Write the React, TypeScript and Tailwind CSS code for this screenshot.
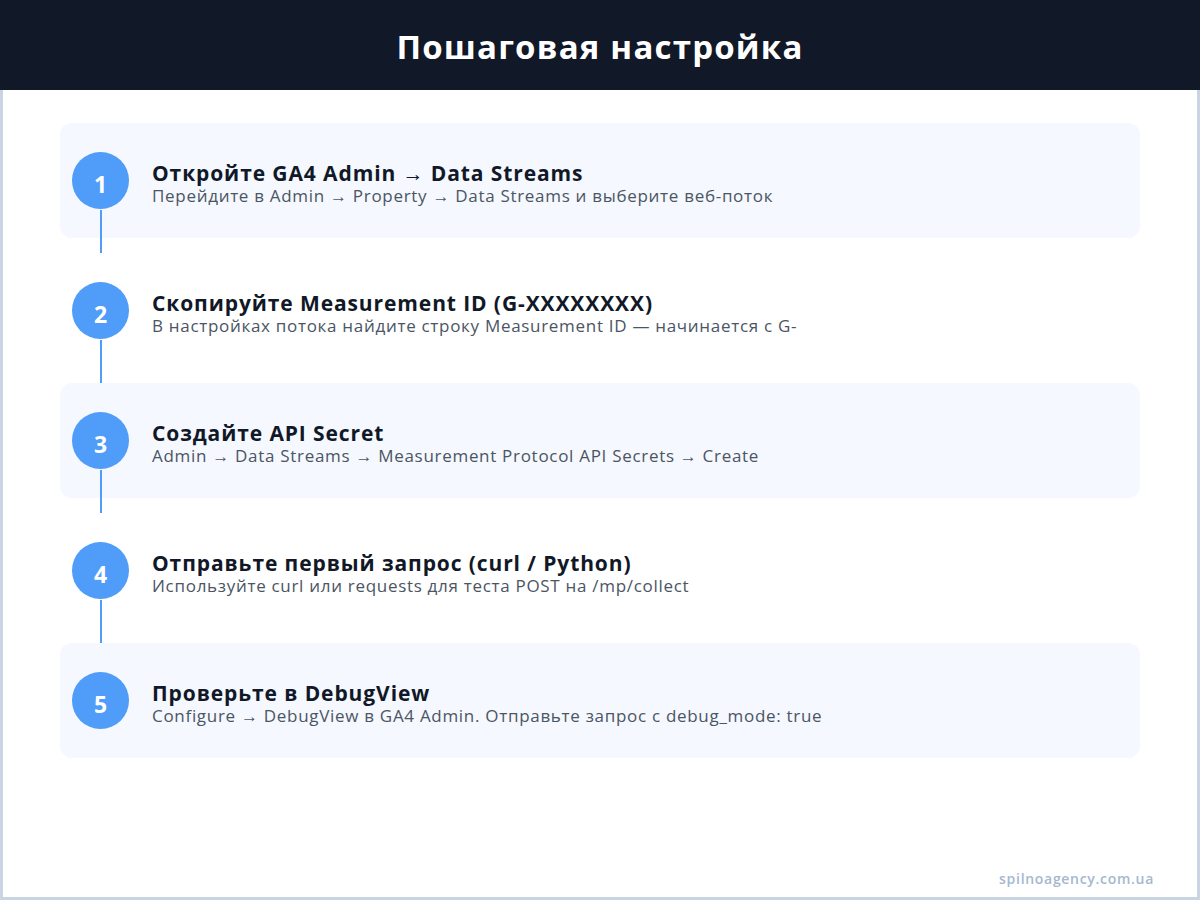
import React from "react";

const steps = [
  ["Откройте GA4 Admin → Data Streams", "Перейдите в Admin → Property → Data Streams и выберите веб-поток"],
  ["Скопируйте Measurement ID (G-XXXXXXXX)", "В настройках потока найдите строку Measurement ID — начинается с G-"],
  ["Создайте API Secret", "Admin → Data Streams → Measurement Protocol API Secrets → Create"],
  ["Отправьте первый запрос (curl / Python)", "Используйте curl или requests для теста POST на /mp/collect"],
  ["Проверьте в DebugView", "Configure → DebugView в GA4 Admin. Отправьте запрос с debug_mode: true"],
];

export default function App() {
  return (
    <div className="w-[1200px] h-[900px] flex flex-col bg-white border-x-[3px] border-b-[3px] border-[#cbd5e1]" style={{ fontFamily: '"Open Sans", "Noto Sans", sans-serif' }}>
      <div className="h-[90px] -mx-[3px] bg-[#111827] flex items-center justify-center shrink-0">
        <h1 className="text-white text-[33px] font-bold tracking-[1.2px] pt-[4px]">Пошаговая настройка</h1>
      </div>
      <div className="flex flex-col gap-[15px] px-[57px] pt-[33px]">
        {steps.map(([t, d], i) => (
          <div key={i} className={`h-[115px] rounded-[12px] flex items-center pl-[12px] gap-[23px] ${i % 2 === 0 ? "bg-[#f5f8fe]" : ""}`}>
            <div className="relative w-[57px] h-[57px] shrink-0">
              <div className="w-[57px] h-[57px] rounded-full bg-[#4f9cf9] flex items-center justify-center text-white text-[23px] font-bold pt-[8px]">{i + 1}</div>
              {i < 4 && <div className="absolute left-[27.5px] top-[58px] w-[2px] h-[43px] bg-[#4f9cf9]" />}
            </div>
            <div className="flex flex-col pt-[7px]">
              <div className="text-[21px] font-bold text-[#111827] leading-[24px] tracking-[0.9px]">{t}</div>
              <div className="text-[17px] text-[#4b5563] leading-[22px] tracking-[0.7px]">{d}</div>
            </div>
          </div>
        ))}
      </div>
      <div className="mt-auto flex justify-end pr-[43px] pb-[8px]">
        <span className="text-[14px] font-semibold text-[#a5b8cf] tracking-[0.7px]">spilnoagency.com.ua</span>
      </div>
    </div>
  );
}
